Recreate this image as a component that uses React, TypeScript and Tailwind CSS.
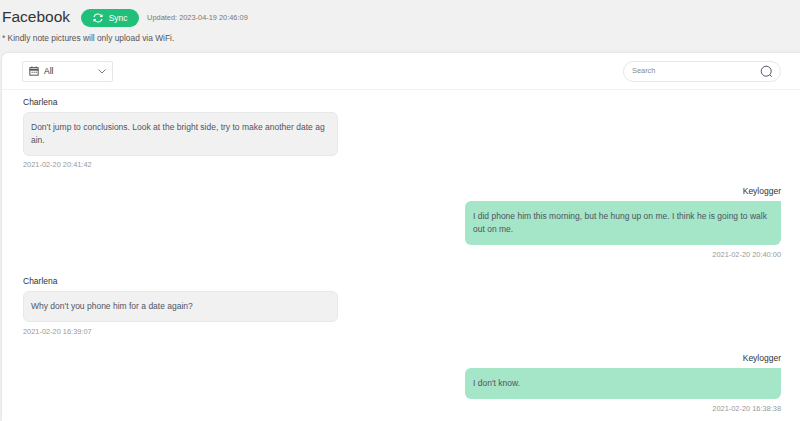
import React from "react";

function Msg({ name, text, time, right, tight }: { name: string; text: string; time: string; right?: boolean; tight?: boolean }) {
  return (
    <div className={right ? "flex flex-col items-end" : "flex flex-col items-start"}>
      <div className="text-[8.5px] leading-[12px] text-[#333333]">{name}</div>
      <div
        className={
          right
            ? "mt-[4px] w-[316px] rounded-[6px] rounded-tr-none bg-[#a5e5c8] py-[9px] pl-[8px] pr-[14px] text-[8.5px] leading-[13px] text-[#4f5462] break-all"
            : "mt-[4px] w-[315px] rounded-[6px] border border-[#e8e8e8] bg-[#f1f1f1] py-[8px] pl-[7px] pr-[12px] text-[8.5px] leading-[13px] text-[#4f5462] break-all"
        }
      >
        {text}
      </div>
      <div className={tight ? "mt-[4px] text-[7.4px] leading-[10px] text-[#999999]" : "mt-[5px] text-[7.4px] leading-[10px] text-[#999999]"}>{time}</div>
    </div>
  );
}

export default function App() {
  return (
    <div className="h-[421px] w-[800px] overflow-hidden bg-[#f1f1f1] font-['Liberation_Sans',sans-serif]">
      <div className="h-[53px] pl-[2px]">
        <div className="flex items-center pt-[9px]">
          <span className="-mt-[3px] text-[15.5px] leading-[17px] text-[#333333]">Facebook</span>
          <button className="ml-[11px] flex h-[18px] w-[58px] items-center justify-center gap-[5px] rounded-full bg-[#20bf7a] pr-[1px] text-[8.5px] text-white">
            <svg width="12" height="12" viewBox="0 0 24 24" fill="none" stroke="#ffffff" strokeWidth="2.2">
              <path d="M4 10a8 8 0 0 1 14-3l2 2M20 14a8 8 0 0 1-14 3l-2-2" />
              <path d="M20 5v4h-4M4 19v-4h4" />
            </svg>
            Sync
          </button>
          <span className="ml-[8px] text-[7.4px] text-[#777777]">Updated: 2023-04-19 20:46:09</span>
        </div>
        <div className="mt-[5px] text-[8.4px] leading-[12px] text-[#555555]">* Kindly note pictures will only upload via WiFi.</div>
      </div>
      <div className="ml-[2px] h-[368px] rounded-tl-[6px] bg-white shadow-[0_0_3px_rgba(0,0,0,0.1)]">
        <div className="flex h-[37px] items-center justify-between border-b border-[#f3f3f3] pl-[20px] pr-[19px]">
          <div className="flex h-[21px] w-[91px] items-center rounded-[2px] border border-[#e6e6e6] pl-[6px] pr-[5px]">
            <svg width="10" height="10" viewBox="0 0 12 12" fill="none" stroke="#555555" strokeWidth="1.2">
              <rect x="1" y="2" width="10" height="9" />
              <path d="M1 4.5h10" strokeWidth="2.2" />
              <path d="M3.5 0.5v2M8.5 0.5v2" />
              <path d="M3 7.5h1.5M5.5 7.5h1.5M8 7.5h1.5" />
            </svg>
            <span className="ml-[5px] text-[8.5px] text-[#333333]">All</span>
            <svg className="ml-auto mr-[1px]" width="8" height="5" viewBox="0 0 8 5" fill="none" stroke="#777777">
              <path d="M0.5 0.5L4 4l3.5-3.5" />
            </svg>
          </div>
          <div className="flex h-[21px] w-[158px] items-center justify-between rounded-full border border-[#e6e6e6] pl-[8px] pr-[7px]">
            <span className="text-[7.4px] text-[#888888]">Search</span>
            <svg width="13" height="13" viewBox="0 0 13 13" fill="none" stroke="#555566" strokeWidth="1">
              <circle cx="6.2" cy="6.2" r="5" />
              <path d="M9.8 9.8l2 2" />
            </svg>
          </div>
        </div>
        <div className="flex flex-col gap-[15px] pl-[21px] pr-[19px] pt-[6px]">
          <Msg tight name="Charlena" text="Don't jump to conclusions. Look at the bright side, try to make another date again." time="2021-02-20 20:41:42" />
          <Msg right name="Keylogger" text="I did phone him this morning, but he hung up on me. I think he is going to walk out on me." time="2021-02-20 20:40:00" />
          <Msg name="Charlena" text="Why don't you phone him for a date again?" time="2021-02-20 16:39:07" />
          <Msg right name="Keylogger" text="I don't know." time="2021-02-20 16:38:38" />
        </div>
      </div>
    </div>
  );
}
